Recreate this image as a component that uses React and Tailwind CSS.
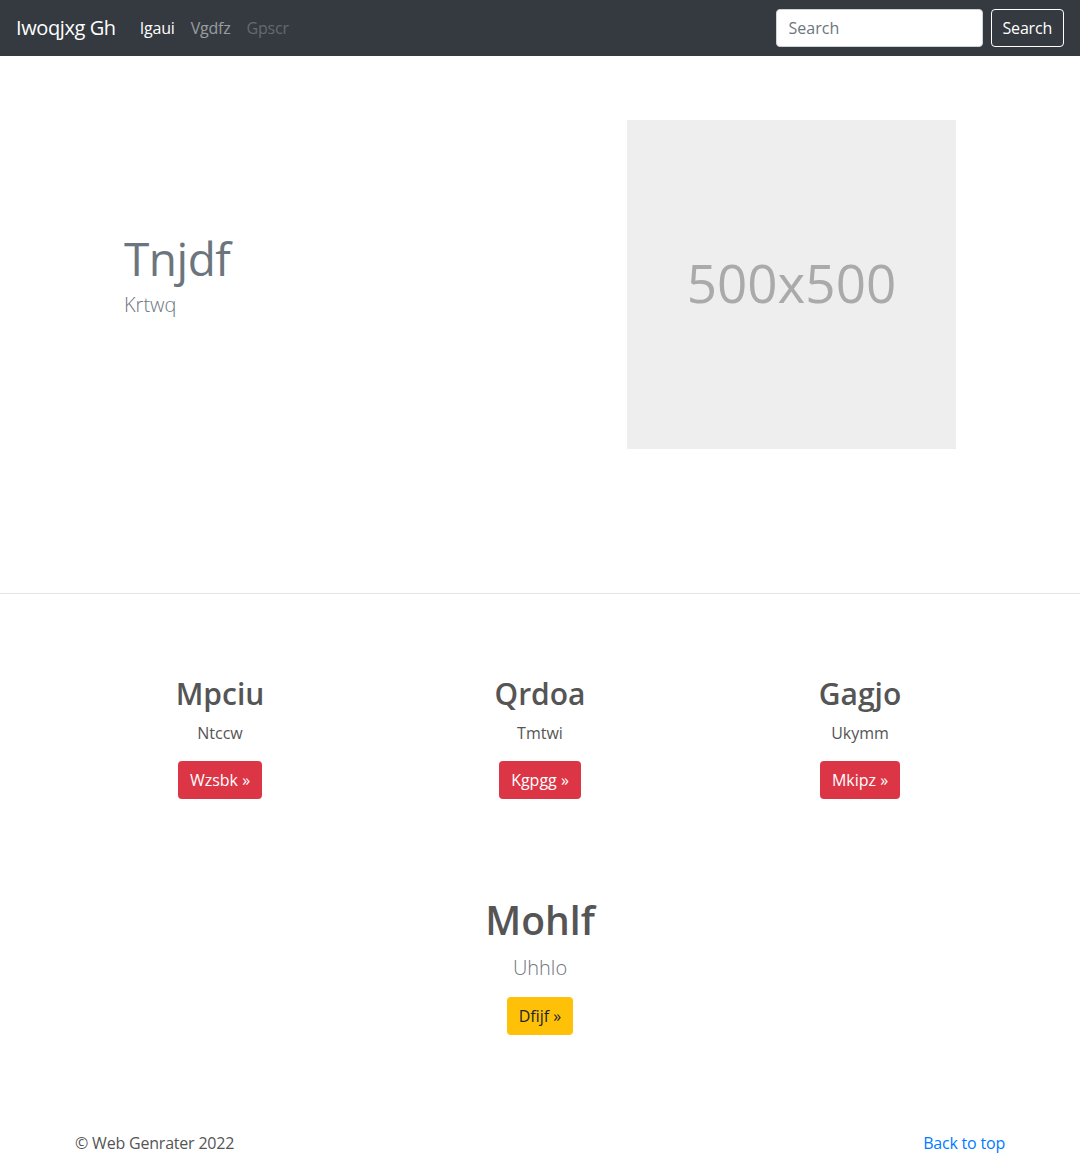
import React from "react";

const font = { fontFamily: '"Open Sans", "Noto Sans", sans-serif' };

function Feature({ title, text, btn }) {
  return (
    <div className="flex flex-col items-center text-center">
      <h2 className="text-[30px] leading-[38px] font-semibold text-[#555] mb-[8px]">{title}</h2>
      <p className="text-base leading-6 text-[#555] mb-[16px]">{text}</p>
      <button className="h-[38px] px-3 rounded bg-[#dc3545] text-white text-base leading-6">
        {btn} »
      </button>
    </div>
  );
}

export default function App() {
  return (
    <div className="bg-white min-h-[1155px] text-[#212529]" style={font}>
      <nav className="h-14 bg-[#343a40] flex items-center px-4">
        <a className="text-xl text-white mr-4 leading-[30px] tracking-[-0.4px]">Iwoqjxg Gh</a>
        <ul className="flex items-center">
          <li className="px-2 text-base text-white tracking-[-0.2px]">Igaui</li>
          <li className="px-2 text-base text-white/50 tracking-[-0.2px]">Vgdfz</li>
          <li className="px-2 text-base text-white/25 tracking-[-0.2px]">Gpscr</li>
        </ul>
        <div className="ml-auto flex items-center">
          <input
            className="w-[207px] h-[38px] rounded bg-white border border-[#ced4da] px-3 text-base text-[#495057] placeholder:text-[#6c757d] outline-none"
            placeholder="Search"
            style={font}
          />
          <button className="ml-2 h-[38px] px-[11px] rounded border border-white text-white text-base tracking-[-0.2px]">
            Search
          </button>
        </div>
      </nav>

      <section className="border-b border-[#e5e5e5]">
        <div className="w-[960px] mx-auto grid grid-cols-2 h-[537px]">
          <div className="pl-[64px] pt-[175px]">
            <h1 className="text-[46px] leading-[1.2] font-normal text-[#6c757d] tracking-[-0.5px]">Tnjdf</h1>
            <p className="text-xl leading-[30px] font-light text-[#6c757d] mt-[4px]">Krtwq</p>
          </div>
          <div className="pl-[87px] pt-[64px]">
            <div className="w-[329px] h-[329px] bg-[#eeeeee] flex items-center justify-center">
              <span className="text-[53px] text-[#aaaaaa] -mt-[4px]">500x500</span>
            </div>
          </div>
        </div>
      </section>

      <section className="w-[960px] mx-auto pt-[81px]">
        <div className="grid grid-cols-3">
          <Feature title="Mpciu" text="Ntccw" btn="Wzsbk" />
          <Feature title="Qrdoa" text="Tmtwi" btn="Kgpgg" />
          <Feature title="Gagjo" text="Ukymm" btn="Mkipz" />
        </div>

        <div className="flex flex-col items-center text-center mt-[98px]">
          <h2 className="text-[39px] leading-[1.2] font-semibold text-[#555]">Mohlf</h2>
          <p className="text-xl leading-[30px] font-light text-[#6c757d] mt-[9px]">Uhhlo</p>
          <button className="mt-[14px] h-[38px] px-3 rounded bg-[#ffc107] text-[#212529] text-base">
            Dfijf »
          </button>
        </div>
      </section>

      <footer className="w-[960px] mx-auto px-[15px] mt-[96px] flex justify-between text-base leading-6">
        <p className="text-[#555] tracking-[-0.2px]">© Web Genrater 2022</p>
        <a className="text-[#007bff] tracking-[-0.2px]">Back to top</a>
      </footer>
    </div>
  );
}
